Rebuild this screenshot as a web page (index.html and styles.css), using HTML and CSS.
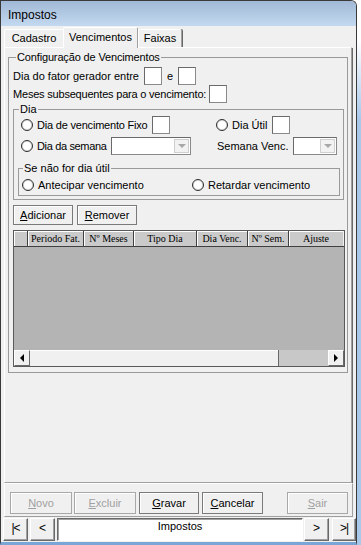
FILE: index.html
```html
<!DOCTYPE html>
<html lang="pt">
<head>
    <meta charset="UTF-8">
    <title>Impostos</title>
    <link rel="stylesheet" href="styles.css">
</head>
<body>

    <div class="window">
        <div class="titlebar">Impostos</div>

        <div class="tabs">
            <div class="tab t-cad">Cadastro</div>
            <div class="tab t-venc active">Vencimentos</div>
            <div class="tab t-fai">Faixas</div>
        </div>

        <div class="panel">
            <fieldset class="config">
                <legend>Configuração de Vencimentos</legend>

                <div class="row r1">
                    <span>Dia do fator gerador entre</span>
                    <span class="box ml5"></span>
                    <span class="ml5">e</span>
                    <span class="box ml5"></span>
                </div>
                <div class="row r2">
                    <span class="tight">Meses subsequentes para o vencimento:</span>
                    <span class="box ml3"></span>
                </div>

                <fieldset class="dia">
                    <legend>Dia</legend>

                    <div class="row ra">
                        <div class="cell c-fixo">
                            <i class="radio"></i>
                            <span class="lbl-fixo tight">Dia de vencimento Fixo</span>
                            <span class="box"></span>
                        </div>
                        <div class="cell">
                            <i class="radio"></i>
                            <span class="lbl-util">Dia Útil</span>
                            <span class="box"></span>
                        </div>
                    </div>

                    <div class="row rb">
                        <div class="cell c-sem">
                            <i class="radio"></i>
                            <span class="lbl-sem tighter">Dia da semana</span>
                            <span class="combo c-wide"><b></b></span>
                        </div>
                        <div class="cell">
                            <span class="lbl-svenc">Semana Venc.</span>
                            <span class="combo c-small"><b></b></span>
                        </div>
                    </div>

                    <fieldset class="sep">
                        <legend>Se não for dia útil</legend>
                        <div class="row rc">
                            <div class="cell c-ante">
                                <i class="radio"></i>
                                <span>Antecipar vencimento</span>
                            </div>
                            <div class="cell">
                                <i class="radio"></i>
                                <span>Retardar vencimento</span>
                            </div>
                        </div>
                    </fieldset>
                </fieldset>

                <div class="btnrow">
                    <div class="btn"><span><u>A</u>dicionar</span></div>
                    <div class="btn"><span><u>R</u>emover</span></div>
                </div>

                <div class="grid">
                    <div class="grid-head">
                        <div class="hc h-ind"></div>
                        <div class="hc h-per">Periodo Fat.</div>
                        <div class="hc h-mes">Nº Meses</div>
                        <div class="hc h-tipo">Tipo Dia</div>
                        <div class="hc h-dia">Dia Venc.</div>
                        <div class="hc h-sem">Nº Sem.</div>
                        <div class="hc h-aju">Ajuste</div>
                    </div>
                    <div class="grid-body"></div>
                    <div class="hscroll">
                        <div class="sbtn"><i class="arr-left"></i></div>
                        <div class="track"></div>
                        <div class="thumb"></div>
                        <div class="sbtn"><i class="arr-right"></i></div>
                    </div>
                </div>
            </fieldset>
        </div>

        <div class="actions">
            <div class="abtn a-novo off"><span><u>N</u>ovo</span></div>
            <div class="abtn a-exc off"><span><u>E</u>xcluir</span></div>
            <div class="abtn a-gra"><span><u>G</u>ravar</span></div>
            <div class="abtn a-can"><span><u>C</u>ancelar</span></div>
            <div class="abtn a-sair off"><span><u>S</u>air</span></div>
        </div>

        <div class="nav">
            <div class="nb n-first">|&lt;</div>
            <div class="nb n-prev">&lt;</div>
            <div class="navfield">Impostos</div>
            <div class="nb n-next">&gt;</div>
            <div class="nb n-last">&gt;|</div>
        </div>
    </div>

</body>
</html>
```

FILE: styles.css
```css
* {
    margin: 0;
    padding: 0;
    box-sizing: border-box;
}

body {
    font-family: 'Liberation Sans', Arial, sans-serif;
    font-size: 11px;
    color: #000;
    width: 361px;
    height: 545px;
    overflow: hidden;
    background: linear-gradient(#ffffff 0, #ffffff 40px, #a8c8ea 120px);
}

/* window frame */
.window {
    width: 357px;
    height: 545px;
    border: 1px solid #3a3a3a;
    border-bottom: 3px solid #7aa6d6;
    border-top-right-radius: 6px;
    background-color: #f0f0f0;
    display: flex;
    flex-direction: column;
}

.titlebar {
    height: 25px;
    padding: 4px 0 0 7px;
    font-size: 12px;
    line-height: 21px;
    background: linear-gradient(#a1b9d6, #c3d9f0);
    border-top-right-radius: 5px;
}

/* tabs */
.tabs {
    height: 21px;
    display: flex;
    align-items: flex-end;
    padding-left: 3px;
}

.tab {
    height: 18px;
    line-height: 17px;
    text-align: center;
    border: 1px solid #fff;
    border-bottom: 0;
    border-right-color: #a0a0a0;
    border-radius: 2px 2px 0 0;
    background-color: #f0f0f0;
}

.t-cad {
    width: 60px;
}

.t-venc {
    width: 75px;
}

.t-fai {
    width: 44px;
    box-shadow: 1px 0 0 #696969;
}

.tab.active {
    height: 21px;
    margin-left: -1px;
    margin-bottom: -1px;
    padding-top: 1px;
    position: relative;
    z-index: 1;
}

/* tab page */
.panel {
    width: 348px;
    height: 436px;
    margin-left: 3px;
    border: 1px solid;
    border-color: #fff #a0a0a0 #a0a0a0 #fff;
    box-shadow: 1px 1px 0 #696969;
}

fieldset {
    border: 1px solid #9a9a9a;
    min-width: 0;
}

legend {
    padding: 0 1px;
    line-height: 12px;
}

.tight {
    letter-spacing: -0.2px;
    white-space: nowrap;
}

.tighter {
    letter-spacing: -0.35px;
    white-space: nowrap;
}

.config {
    margin: 3px 3px 0 3px;
    padding: 2px 0 5px 0;
}

.config > legend {
    line-height: 13px;
    margin-left: 7px;
    letter-spacing: -0.15px;
}

.row {
    display: flex;
    align-items: center;
}

.cell {
    display: flex;
    align-items: center;
}

.r1 {
    height: 19px;
    padding-left: 4px;
}

.r2 {
    height: 18px;
    padding-left: 4px;
}

.ml5 {
    margin-left: 5px;
}

.ml3 {
    margin-left: 3px;
}

.box {
    width: 18px;
    height: 18px;
    background-color: #fff;
    border: 1px solid #8a8a8a;
    border-top-color: #6a6a6a;
    border-left-color: #6a6a6a;
}

.radio {
    width: 12px;
    height: 12px;
    margin-right: 4px;
    border-radius: 50%;
    border: 1px solid #2c2c2c;
    background-color: #fff;
    box-shadow: inset 0 0 0 1px #d8d8d8;
}

/* Dia group */
.dia {
    margin: 0 3px 0 4px;
    padding: 0 0 3px 0;
}

.dia > legend {
    margin-left: 5px;
}

.ra {
    height: 19px;
}

.rb {
    height: 18px;
    margin-top: 3px;
}

.c-fixo {
    width: 202px;
    padding-left: 7px;
}

.c-sem {
    width: 203px;
    padding-left: 7px;
}

.lbl-fixo {
    width: 115px;
}

.lbl-util {
    width: 40px;
}

.lbl-sem {
    width: 74px;
}

.lbl-svenc {
    width: 76px;
}

.combo {
    height: 18px;
    background-color: #fff;
    border: 1px solid #8a8a8a;
    border-top-color: #6a6a6a;
    border-left-color: #6a6a6a;
    display: flex;
    justify-content: flex-end;
    padding: 1px;
}

.c-wide {
    width: 80px;
}

.c-small {
    width: 44px;
}

.combo b {
    width: 15px;
    height: 14px;
    background-color: #f2f2f2;
    border: 1px solid #cfcfcf;
    display: flex;
    align-items: center;
    justify-content: center;
}

.combo b::after {
    content: '';
    border-top: 4px solid #a8a8a8;
    border-left: 4px solid transparent;
    border-right: 4px solid transparent;
}

/* Se nao for dia util */
.sep {
    margin: 7px 3px 0 4px;
    padding: 1px 0 1px 0;
}

.sep > legend {
    margin-left: 4px;
}

.rc {
    height: 19px;
}

.c-ante {
    width: 173px;
    padding-left: 3px;
}

/* add / remove */
.btnrow {
    display: flex;
    gap: 4px;
    margin: 5px 0 0 4px;
}

.btn {
    width: 60px;
    height: 20px;
    border: 1px solid #7a7a7a;
    background-color: #f0f0f0;
    box-shadow: inset 1px 1px 0 #fff;
    display: flex;
    align-items: center;
    justify-content: center;
}

/* grid */
.grid {
    margin: 5px 2px 0 4px;
    border: 1px solid #5a5a5a;
}

.grid-head {
    display: flex;
    height: 16px;
    border-bottom: 1px solid #404040;
}

.hc {
    height: 15px;
    background-color: #cacaca;
    border-right: 1px solid #404040;
    box-shadow: inset 1px 1px 0 #fff;
    font-family: 'Liberation Serif', 'Times New Roman', serif;
    font-size: 10px;
    line-height: 15px;
    text-align: center;
}

.h-ind { width: 14px; }
.h-per { width: 56px; }
.h-mes { width: 50px; }
.h-tipo { width: 63px; }
.h-dia { width: 51px; }
.h-sem { width: 41px; }
.h-aju { width: 54px; border-right: 0; }

.grid-body {
    height: 103px;
    background-color: #b4b4b4;
}

.hscroll {
    display: flex;
    height: 16px;
}

.sbtn {
    width: 16px;
    height: 16px;
    background-color: #f0f0f0;
    border: 1px solid;
    border-color: #fff #696969 #696969 #fff;
    display: flex;
    align-items: center;
    justify-content: center;
}

.arr-left {
    border-right: 4px solid #000;
    border-top: 4px solid transparent;
    border-bottom: 4px solid transparent;
}

.arr-right {
    border-left: 4px solid #000;
    border-top: 4px solid transparent;
    border-bottom: 4px solid transparent;
}

.track {
    flex: 1;
    background-color: #f0f0f0;
    border-top: 1px solid #fff;
}

.thumb {
    width: 50px;
    background-color: #c8c8c8;
    border-left: 1px solid #696969;
}

/* bottom buttons */
.actions {
    width: 349px;
    height: 34px;
    margin-left: 3px;
    border: 1px solid;
    border-color: #fff #a0a0a0 #a0a0a0 #fff;
    display: flex;
    padding: 8px 0 0 5px;
}

.abtn {
    height: 22px;
    border: 1px solid #7a7a7a;
    background-color: #f0f0f0;
    box-shadow: inset 1px 1px 0 #fff;
    display: flex;
    align-items: center;
    justify-content: center;
}

.abtn.off {
    color: #a0a0a0;
    border-color: #a8a8a8;
}

.a-novo { width: 62px; }
.a-exc { width: 62px; margin-left: 2px; }
.a-gra { width: 60px; margin-left: 3px; }
.a-can { width: 61px; margin-left: 3px; }
.a-sair { width: 61px; margin-left: 24px; }

/* navigation */
.nav {
    height: 25px;
    display: flex;
    padding: 1px 0 0 2px;
}

.nb {
    width: 25px;
    height: 23px;
    border: 1px solid;
    border-color: #fff #696969 #696969 #fff;
    box-shadow: inset -1px -1px 0 #a0a0a0;
    text-align: center;
    font-size: 12px;
    line-height: 13px;
    padding-top: 3px;
}

.n-first {
    letter-spacing: -1px;
}

.n-prev {
    margin-left: 2px;
}

.n-next {
    margin-left: 1px;
}

.n-last {
    width: 24px;
    margin-left: 3px;
    letter-spacing: -1px;
}

.navfield {
    width: 246px;
    height: 23px;
    margin-left: 2px;
    background-color: #fff;
    border: 1px solid;
    border-color: #696969 #fff #fff #696969;
    box-shadow: inset 1px 1px 0 #a0a0a0;
    text-align: center;
    line-height: 13px;
    padding-top: 1px;
}
```
